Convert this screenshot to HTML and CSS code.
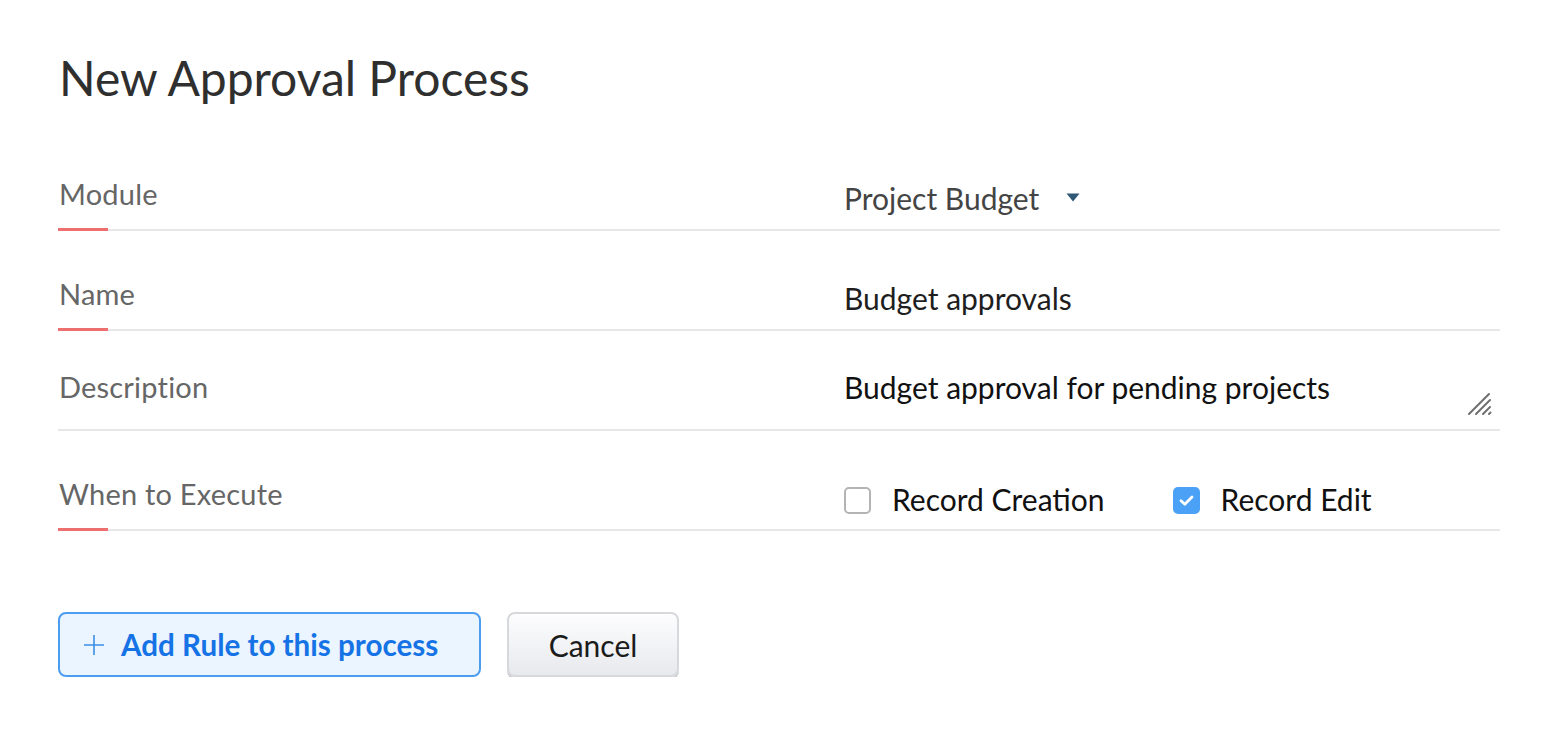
FILE: index.html
```html
<!DOCTYPE html>
<html lang="en">
<head>
<meta charset="utf-8">
<title>New Approval Process</title>
<link rel="stylesheet" href="styles.css">
</head>
<body>
<main class="page">
  <h1 class="title">New Approval Process</h1>
  <section class="form">
    <div class="row req">
      <div class="label">Module</div>
      <div class="value select">
        <span class="select-text">Project Budget</span>
        <svg class="caret" width="14" height="9" viewBox="0 0 14 9"><path d="M0.5 0.5 L13.5 0.5 L7 8.5 Z" fill="#2f5876"/></svg>
      </div>
    </div>
    <div class="row req">
      <div class="label">Name</div>
      <div class="value">Budget approvals</div>
    </div>
    <div class="row desc">
      <div class="label">Description</div>
      <div class="value textarea">
        <span>Budget approval for pending projects</span>
        <svg class="grip" width="28" height="26" viewBox="0 0 28 26">
          <g stroke="#6e6e6e" stroke-width="2" stroke-linecap="round">
            <line x1="3" y1="23" x2="23" y2="3"/>
            <line x1="10" y1="23" x2="24" y2="9"/>
            <line x1="17" y1="23" x2="24" y2="16"/>
            <line x1="23" y1="23" x2="24.5" y2="21.5"/>
          </g>
        </svg>
      </div>
    </div>
    <div class="row req">
      <div class="label">When to Execute</div>
      <div class="value checks">
        <label class="check"><span class="box"></span>Record Creation</label>
        <label class="check"><span class="box on"><svg width="17" height="13" viewBox="0 0 17 13"><path d="M3 6.8 L6.8 10.2 L14 3" fill="none" stroke="#fff" stroke-width="2.8" stroke-linecap="round" stroke-linejoin="round"/></svg></span>Record Edit</label>
      </div>
    </div>
  </section>
  <div class="actions">
    <button class="btn primary"><svg class="plus" width="22" height="22" viewBox="0 0 22 22"><path d="M11 1 V21 M1 11 H21" stroke="#3b8fe6" stroke-width="1.6"/></svg>Add Rule to this process</button>
    <button class="btn cancel">Cancel</button>
  </div>
</main>
</body>
</html>
```

FILE: styles.css
```css
* { box-sizing: border-box; }
html, body { margin: 0; padding: 0; background: #fff; }
body { font-family: Lato, "Open Sans", "Liberation Sans", sans-serif; color: #333; }

.page { padding: 50px 60px 0 58px; width: 1560px; }

.title {
  margin: 0 0 0 1px;
  font-size: 48px;
  font-weight: 400;
  color: #2f2f2f;
  line-height: 56px;
  height: 81px;
}

.form { width: 1442px; }

.row {
  position: relative;
  display: grid;
  grid-template-columns: 786px 1fr;
  height: 100px;
  border-bottom: 2px solid #e7e7e7;
  align-items: end;
}
.row.req::after {
  content: "";
  position: absolute;
  left: 0;
  bottom: -2px;
  width: 50px;
  height: 3px;
  background: #ee6f6f;
}

.label {
  font-size: 29px;
  letter-spacing: 0.2px;
  color: #666;
  line-height: 36px;
  padding: 0 0 17px 1px;
}
.value {
  font-size: 30px;
  color: #1e1e1e;
  line-height: 36px;
  padding-bottom: 13px;
}

.select { display: flex; align-items: center; color: #444; }
.select .caret { margin-left: 27px; margin-top: -2px; }

.desc .label { padding-bottom: 24px; }
.textarea {
  position: relative;
  height: 72px;
  align-self: end;
  padding: 12px 0 0 0;
  color: #111;
}
.textarea .grip { position: absolute; right: 6px; bottom: 12px; }

.checks { display: flex; align-items: center; color: #111; padding-bottom: 12px; }
.check { display: flex; align-items: center; margin-right: 68px; }
.box {
  width: 27px;
  height: 27px;
  border: 2px solid #b4b4b4;
  border-radius: 5px;
  margin-right: 21px;
  display: flex;
  align-items: center;
  justify-content: center;
  margin-top: 2px;
}
.box.on { background: #4aa1f6; border-color: #4aa1f6; }

.actions { display: flex; gap: 26px; margin-top: 81px; }
.btn {
  font-family: Lato, "Open Sans", "Liberation Sans", sans-serif;
  font-size: 30px;
  height: 65px;
  border-radius: 8px;
  cursor: pointer;
  display: flex;
  align-items: center;
}
.primary {
  width: 423px;
  border: 2px solid #4c9cef;
  background: #ebf5ff;
  color: #1673e6;
  font-weight: 700;
  font-size: 29.6px;
  padding: 0 0 0 23px;
}
.primary .plus { margin-right: 16px; }
.cancel {
  width: 172px;
  justify-content: center;
  border: 2px solid #d6d8dc;
  background: linear-gradient(#fdfdfe, #e7e9ed);
  box-shadow: 0 2px 0 #c4c6ca;
  color: #1b1b1b;
  font-weight: 400;
}
```
